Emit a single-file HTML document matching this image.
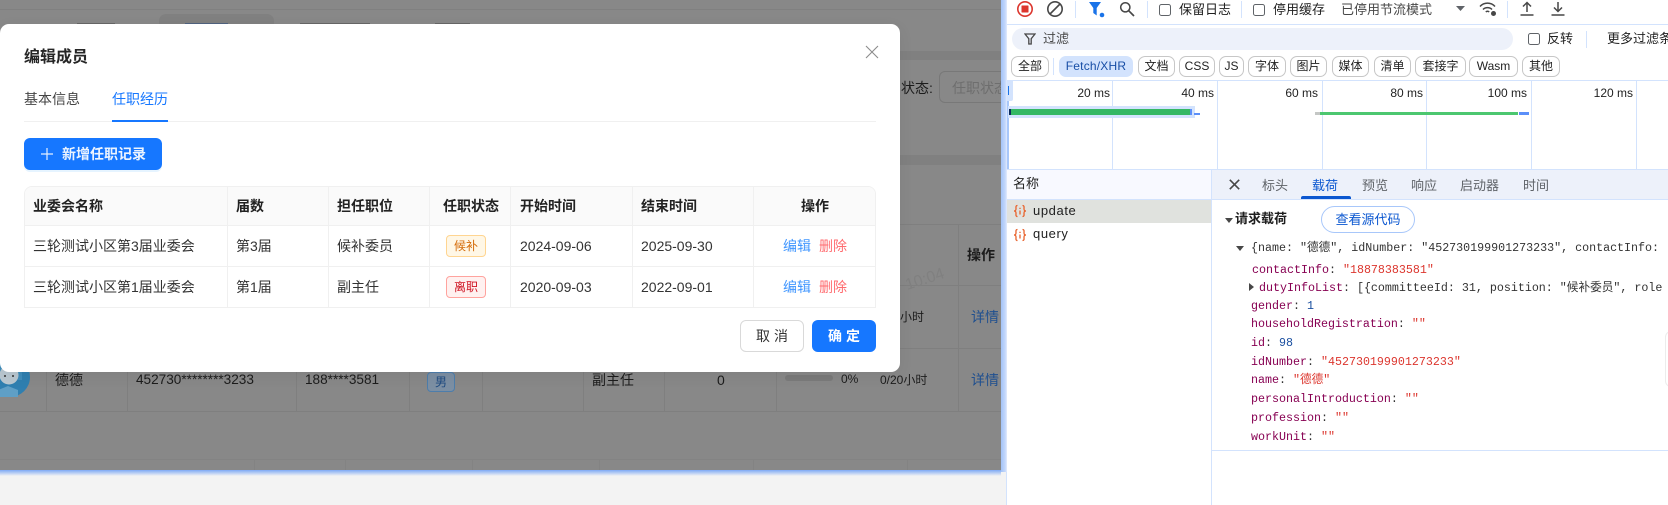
<!DOCTYPE html>
<html lang="zh-CN">
<head>
<meta charset="utf-8">
<title>编辑成员</title>
<style>
html,body{margin:0;padding:0;width:1668px;height:505px;overflow:hidden;background:#f3f3f3}
body{position:relative;font-family:"Liberation Sans","Noto Sans CJK SC",sans-serif;font-size:14px;color:#333}
div,span,svg{position:absolute;box-sizing:border-box}
.t{white-space:nowrap;height:20px;line-height:20px}
.b{font-weight:700;color:#222}
#page{left:0;top:0;width:1001px;height:470px;background:#888;overflow:hidden}
#page .t{color:#1c1c1c}
#modal{left:0;top:24px;width:900px;height:348px;background:#fff;border-radius:9px;box-shadow:0 4px 16px rgba(0,0,0,.06);z-index:5}
.in{left:0;top:0;width:100%;height:100%}
.th{background:#fafafa}
.line{background:#f0f0f0}
.tag{height:22px;width:40px;left:446px;border-radius:4px;font-size:12px;line-height:20px;text-align:center;border:1px solid}
.o{background:#fff7e6;border-color:#ffd591;color:#d46b08}
.d{background:#fff1f0;border-color:#ffa39e;color:#cf1322}
.lk{color:#4096ff}.dl{color:#ff6b6f}
#dt{left:1007px;top:0;width:661px;height:505px;background:#fff;overflow:hidden;font-size:13px;color:#1f1f1f}
.dl2{background:#d3e3fd}
.cb{width:12px;height:12px;border:1.5px solid #5f6368;border-radius:2.5px;background:#fff}
.chip{top:56px;height:21px;border:1px solid #c7c7c7;border-radius:7px;font-size:12px;line-height:19px;text-align:center;color:#1f1f1f;white-space:nowrap;background:#fff}
.ms{top:83px;font-size:12px;height:20px;line-height:20px;text-align:right;width:60px;color:#1f1f1f}
.gl{top:81px;width:1px;height:88px;background:#d3e3fd}
.m{font-family:"Liberation Mono","Noto Sans CJK SC",monospace;font-size:11.67px;white-space:nowrap;height:18px;line-height:18px;color:#333}
.m i{font-style:normal;color:#870052}.m u{text-decoration:none;color:#dc362e}.m b{font-weight:400;color:#1a4fa0}
.tab{top:176px;height:20px;line-height:20px;font-size:13px;color:#5f6368;white-space:nowrap}
</style>
</head>
<body>
<div id="page">
  <div style="left:0;top:9px;width:1001px;height:1px;background:#808080"></div>
  <div style="left:159px;top:14px;width:115px;height:14px;background:#808080;border-radius:7px 7px 0 0"></div>
  <div style="left:77px;top:23px;width:38px;height:1px;background:#666"></div>
  <div style="left:185px;top:23px;width:43px;height:1px;background:#50627f"></div>
  <div style="left:300px;top:23px;width:70px;height:1px;background:#666"></div>
  <div style="left:435px;top:23px;width:35px;height:1px;background:#666"></div>
  <div style="left:900px;top:51px;width:101px;height:9px;background:#808080"></div>
  <div class="t" style="left:901px;top:78px;width:34px">状态:</div>
  <div style="left:939px;top:71px;width:90px;height:32px;border:1px solid #787878;border-radius:6px"></div>
  <div class="t" style="left:952px;top:78px"><span style="position:static;color:#6e6e6e">任职状态</span></div>
  <div style="left:900px;top:155px;width:101px;height:10px;background:#808080"></div>
  <div style="left:900px;top:224px;width:101px;height:1px;background:#7f7f7f"></div>
  <div style="left:900px;top:285px;width:101px;height:1px;background:#7f7f7f"></div>
  <div style="left:0;top:348px;width:1001px;height:1px;background:#7f7f7f"></div>
  <div style="left:0;top:411px;width:1001px;height:1px;background:#7f7f7f"></div>
  <div style="left:0;top:459px;width:1001px;height:1px;background:#838383"></div>
  <div style="left:958px;top:224px;width:1px;height:187px;background:#7f7f7f"></div>
  <div class="t b" style="left:967px;top:245px;font-weight:700">操作</div>
  <div class="t" style="left:905px;top:270px;font-size:16px;transform:rotate(-18deg)"><span style="position:static;color:#808080">10:04</span></div>
  <div class="t" style="left:900px;top:307px;font-size:12px">小时</div>
  <div class="t" style="left:971px;top:307px"><span style="position:static;color:#1f4f8f">详情</span></div>
  <div style="left:46px;top:349px;width:1px;height:62px;background:#7f7f7f"></div>
  <div style="left:127px;top:349px;width:1px;height:62px;background:#7f7f7f"></div>
  <div style="left:296px;top:349px;width:1px;height:62px;background:#7f7f7f"></div>
  <div style="left:409px;top:349px;width:1px;height:62px;background:#7f7f7f"></div>
  <div style="left:482px;top:349px;width:1px;height:62px;background:#7f7f7f"></div>
  <div style="left:583px;top:349px;width:1px;height:62px;background:#7f7f7f"></div>
  <div style="left:664px;top:349px;width:1px;height:62px;background:#7f7f7f"></div>
  <div style="left:776px;top:349px;width:1px;height:62px;background:#7f7f7f"></div>
  <div style="left:254px;top:460px;width:1px;height:10px;background:#838383"></div>
  <div style="left:345px;top:460px;width:1px;height:10px;background:#838383"></div>
  <div style="left:472px;top:460px;width:1px;height:10px;background:#838383"></div>
  <div style="left:599px;top:460px;width:1px;height:10px;background:#838383"></div>
  <div style="left:753px;top:460px;width:1px;height:10px;background:#838383"></div>
  <div style="left:907px;top:460px;width:1px;height:10px;background:#838383"></div>
  <svg style="left:-10px;top:357px" width="40" height="40" viewBox="0 0 40 40"><circle cx="20" cy="20" r="20" fill="#2f7fb0"/><path d="M19 5a12 12 0 0 1 13 12v6H7v-6A12 12 0 0 1 19 5z" fill="#3f8dbb"/><circle cx="19" cy="18" r="9.500" fill="#b9c7d0"/><circle cx="15" cy="19" r="1" fill="#333"/><circle cx="23" cy="19" r="1" fill="#333"/><path d="M8 33l10-4 10 4v7H8z" fill="#5f9fc6"/></svg>
  <div class="t" style="left:55px;top:370px">德德</div>
  <div class="t" style="left:136px;top:370px;font-size:13.6px">452730********3233</div>
  <div class="t" style="left:305px;top:370px;font-size:13.6px">188****3581</div>
  <div style="left:427px;top:372px;width:28px;height:20px;border:1px solid #4d7dab;border-radius:4px;background:#7c8fa3;font-size:12px;line-height:18px;text-align:center;color:#1e4a80">男</div>
  <div class="t" style="left:592px;top:370px">副主任</div>
  <div class="t" style="left:717px;top:370px">0</div>
  <div style="left:785px;top:375px;width:48px;height:6px;border-radius:3px;background:#7a7a7a"></div>
  <div class="t" style="left:841px;top:369px;font-size:12px">0%</div>
  <div class="t" style="left:880px;top:370px;font-size:12px">0/20小时</div>
  <div class="t" style="left:971px;top:370px"><span style="position:static;color:#1f4f8f">详情</span></div>
</div>

<div style="left:0;top:470px;width:1001px;height:6px;background:linear-gradient(#7ea9f5,#f3f3f3)"></div>
<div style="left:1001px;top:0;width:6px;height:472px;background:linear-gradient(90deg,#a3c3f8,#c4d8fb 70%,#e2ecfe)"></div>
<div style="left:1006px;top:472px;width:1px;height:33px;background:#d3e3fd"></div>

<div id="modal">
  <div class="in" style="top:-24px">
    <div class="t" style="left:24px;top:48px;font-size:16px;font-weight:700;color:#262626">编辑成员</div>
    <svg style="left:865px;top:45px" width="14" height="14" viewBox="0 0 14 14"><path d="M1 1l12 12M13 1L1 13" stroke="#8c8c8c" stroke-width="1.1" fill="none"/></svg>
    <div class="t" style="left:24px;top:89px;color:#444">基本信息</div>
    <div class="t" style="left:112px;top:89px;color:#1677ff">任职经历</div>
    <div class="line" style="left:24px;top:121px;width:852px;height:1px"></div>
    <div style="left:112px;top:120px;width:56px;height:2px;background:#1677ff"></div>

    <div style="left:24px;top:138px;width:138px;height:32px;border-radius:6px;background:#1677ff;box-shadow:0 2px 0 rgba(5,145,255,.1)"></div>
    <svg style="left:41px;top:148px" width="12" height="12" viewBox="0 0 12 12"><path d="M6 0v12M0 6h12" stroke="#e4efff" stroke-width="1.2"/></svg>
    <div class="t" style="left:62px;top:144px;color:#fff;font-weight:700;opacity:.92">新增任职记录</div>

    <div style="left:24px;top:186px;width:852px;height:122px;border:1px solid #f0f0f0;border-radius:8px 8px 0 0;overflow:hidden;background:#fff">
      <div class="th" style="left:0;top:0;width:852px;height:38px"></div>
    </div>
    <div class="line" style="left:24px;top:225px;width:852px;height:1px"></div>
    <div class="line" style="left:24px;top:266px;width:852px;height:1px"></div>
    <div class="line" style="left:227px;top:187px;width:1px;height:121px"></div>
    <div class="line" style="left:328px;top:187px;width:1px;height:121px"></div>
    <div class="line" style="left:429px;top:187px;width:1px;height:121px"></div>
    <div class="line" style="left:510px;top:187px;width:1px;height:121px"></div>
    <div class="line" style="left:632px;top:187px;width:1px;height:121px"></div>
    <div class="line" style="left:753px;top:187px;width:1px;height:121px"></div>

    <div class="t b" style="left:33px;top:196px">业委会名称</div>
    <div class="t b" style="left:236px;top:196px">届数</div>
    <div class="t b" style="left:337px;top:196px">担任职位</div>
    <div class="t b" style="left:443px;top:196px">任职状态</div>
    <div class="t b" style="left:520px;top:196px">开始时间</div>
    <div class="t b" style="left:641px;top:196px">结束时间</div>
    <div class="t b" style="left:801px;top:196px">操作</div>

    <div class="t" style="left:33px;top:236px">三轮测试小区第3届业委会</div>
    <div class="t" style="left:236px;top:236px">第3届</div>
    <div class="t" style="left:337px;top:236px">候补委员</div>
    <div class="tag o" style="top:235px">候补</div>
    <div class="t" style="left:520px;top:236px">2024-09-06</div>
    <div class="t" style="left:641px;top:236px">2025-09-30</div>
    <div class="t lk" style="left:783px;top:236px">编辑</div>
    <div class="t dl" style="left:819px;top:236px">删除</div>

    <div class="t" style="left:33px;top:277px">三轮测试小区第1届业委会</div>
    <div class="t" style="left:236px;top:277px">第1届</div>
    <div class="t" style="left:337px;top:277px">副主任</div>
    <div class="tag d" style="top:276px">离职</div>
    <div class="t" style="left:520px;top:277px">2020-09-03</div>
    <div class="t" style="left:641px;top:277px">2022-09-01</div>
    <div class="t lk" style="left:783px;top:277px">编辑</div>
    <div class="t dl" style="left:819px;top:277px">删除</div>

    <div style="left:740px;top:320px;width:64px;height:32px;border:1px solid #d9d9d9;border-radius:6px;background:#fff;text-align:center;line-height:30px;color:#333;letter-spacing:4px;text-indent:4px">取消</div>
    <div style="left:812px;top:320px;width:64px;height:32px;border-radius:6px;background:#1677ff;text-align:center;line-height:32px;color:#fff;font-weight:700;letter-spacing:4px;text-indent:4px">确定</div>
  </div>
</div>

<div id="dt">
  <div class="in" style="left:-1007px;width:1668px">
    <!-- toolbar -->
    <svg style="left:1016px;top:0" width="18" height="18" viewBox="0 0 18 18"><circle cx="9" cy="9" r="7.2" fill="none" stroke="#dc362e" stroke-width="1.6"/><rect x="5.500" y="5.500" width="7" height="7" rx=".5" fill="#dc362e"/></svg>
    <svg style="left:1046px;top:0" width="18" height="18" viewBox="0 0 18 18"><circle cx="9" cy="9" r="7.2" fill="none" stroke="#474747" stroke-width="1.6"/><path d="M4 14L14 4" stroke="#474747" stroke-width="1.6"/></svg>
    <div class="dl2" style="left:1075px;top:1px;width:1px;height:17px"></div>
    <svg style="left:1089px;top:2px" width="16" height="16" viewBox="0 0 16 16"><path d="M0 0h12L7.700 6v7.500L4.300 11V6z" fill="#1a73e8"/><circle cx="13" cy="13" r="2.300" fill="#1a73e8"/></svg>
    <svg style="left:1119px;top:1px" width="16" height="16" viewBox="0 0 16 16"><circle cx="6.300" cy="6.300" r="4.600" fill="none" stroke="#474747" stroke-width="1.500"/><path d="M9.800 9.800L15 15" stroke="#474747" stroke-width="1.700"/></svg>
    <div class="dl2" style="left:1147px;top:1px;width:1px;height:17px"></div>
    <div class="cb" style="left:1159px;top:4px"></div>
    <div class="t" style="left:1179px;top:0">保留日志</div>
    <div class="dl2" style="left:1241px;top:1px;width:1px;height:17px"></div>
    <div class="cb" style="left:1253px;top:4px"></div>
    <div class="t" style="left:1273px;top:0">停用缓存</div>
    <div class="t" style="left:1341px;top:0;color:#474747">已停用节流模式</div>
    <svg style="left:1456px;top:6px" width="9" height="5" viewBox="0 0 9 5"><path d="M0 0h9L4.500 5z" fill="#5f6368"/></svg>
    <svg style="left:1479px;top:1px" width="18" height="16" viewBox="0 0 18 16"><path d="M1 5.500C5 1 12 1 16 5.500M4 8.500C6.500 6 10.500 6 13 8.500M6.800 11C7.800 10 9.200 10 10.200 11" fill="none" stroke="#474747" stroke-width="1.500"/><circle cx="14.500" cy="12.500" r="2.500" fill="#474747"/></svg>
    <div class="dl2" style="left:1507px;top:1px;width:1px;height:17px"></div>
    <svg style="left:1520px;top:1px" width="14" height="15" viewBox="0 0 14 15"><path d="M7 11V1.500M3 5.500l4-4 4 4M.5 14h13" fill="none" stroke="#474747" stroke-width="1.500"/></svg>
    <svg style="left:1551px;top:1px" width="14" height="15" viewBox="0 0 14 15"><path d="M7 1v9.500M3 6.500l4 4 4-4M.5 14h13" fill="none" stroke="#474747" stroke-width="1.500"/></svg>
    <div class="dl2" style="left:1007px;top:24px;width:661px;height:1px"></div>

    <!-- filter row -->
    <div style="left:1012px;top:28px;width:501px;height:22px;background:#edf1fa;border-radius:11px"></div>
    <svg style="left:1024px;top:33px" width="12" height="12" viewBox="0 0 12 12"><path d="M1 1h10L7.200 5.700V11H4.800V5.700z" fill="none" stroke="#474747" stroke-width="1.300"/></svg>
    <div class="t" style="left:1043px;top:29px;color:#474747">过滤</div>
    <div class="cb" style="left:1528px;top:33px"></div>
    <div class="t" style="left:1547px;top:29px">反转</div>
    <div class="dl2" style="left:1586px;top:31px;width:1px;height:17px"></div>
    <div class="t" style="left:1607px;top:29px">更多过滤条件</div>

    <!-- chips -->
    <div class="chip" style="left:1011px;width:38px">全部</div>
    <div class="dl2" style="left:1053px;top:58px;width:1px;height:17px"></div>
    <div class="chip" style="left:1059px;width:74px;background:#d3e3fd;border-color:#d3e3fd;color:#174ea6;letter-spacing:.2px">Fetch/XHR</div>
    <div class="chip" style="left:1138px;width:37px">文档</div>
    <div class="chip" style="left:1179px;width:36px">CSS</div>
    <div class="chip" style="left:1219px;width:25px">JS</div>
    <div class="chip" style="left:1248px;width:38px">字体</div>
    <div class="chip" style="left:1290px;width:37px">图片</div>
    <div class="chip" style="left:1332px;width:37px">媒体</div>
    <div class="chip" style="left:1374px;width:37px">清单</div>
    <div class="chip" style="left:1415px;width:51px">套接字</div>
    <div class="chip" style="left:1469px;width:49px">Wasm</div>
    <div class="chip" style="left:1522px;width:38px">其他</div>
    <div class="dl2" style="left:1007px;top:80px;width:661px;height:1px"></div>

    <!-- overview -->
    <div class="gl" style="left:1112px"></div>
    <div class="gl" style="left:1217px"></div>
    <div class="gl" style="left:1322px"></div>
    <div class="gl" style="left:1426px"></div>
    <div class="gl" style="left:1531px"></div>
    <div class="gl" style="left:1636px"></div>
    <div class="ms" style="left:1050px">20 ms</div>
    <div class="ms" style="left:1154px">40 ms</div>
    <div class="ms" style="left:1258px">60 ms</div>
    <div class="ms" style="left:1363px">80 ms</div>
    <div class="ms" style="left:1467px">100 ms</div>
    <div class="ms" style="left:1573px">120 ms</div>
    <div style="left:1007px;top:81px;width:2px;height:88px;background:#a8c7fa"></div>
    <div style="left:1007px;top:81px;width:6px;height:20px;background:#d3e3fd;border-radius:0 0 2px 0"></div>
    <div style="left:1008px;top:86px;width:1px;height:9px;background:#1a73e8"></div>
    <div style="left:1008px;top:106px;width:187px;height:12px;background:#d3e3fd"></div>
    <div style="left:1009px;top:109px;width:2px;height:6px;background:#0d2a5c"></div>
    <div style="left:1011px;top:109px;width:179px;height:6px;background:#34b864"></div>
    <div style="left:1190px;top:109px;width:2px;height:6px;background:#5b8ff9"></div>
    <div style="left:1194px;top:113px;width:6px;height:1.500px;background:#5b8ff9"></div>
    <div style="left:1315px;top:112px;width:5px;height:3px;background:#c4c7c5"></div>
    <div style="left:1320px;top:112px;width:198px;height:3px;background:#4cc770"></div>
    <div style="left:1519px;top:112px;width:10px;height:3px;background:#5b8ff9"></div>
    <div class="dl2" style="left:1007px;top:169px;width:661px;height:1px"></div>

    <!-- name column -->
    <div style="left:1007px;top:170px;width:204px;height:29px;background:#f8f9ff"></div>
    <div class="t" style="left:1013px;top:174px">名称</div>
    <div class="dl2" style="left:1007px;top:199px;width:204px;height:1px"></div>
    <div style="left:1007px;top:200px;width:204px;height:23px;background:#e0e2de"></div>
    <svg style="left:1013px;top:204px" width="14" height="14" viewBox="0 0 14 14"><path d="M4.500 1.500C2.500 1.500 3 3 3 5S1 7 1 7s2 0 2 2-.5 3.500 1.500 3.500M9.500 1.500C11.500 1.500 11 3 11 5s2 2 2 2-2 0-2 2 .5 3.500-1.500 3.500" fill="none" stroke="#e8622c" stroke-width="1.300"/><path d="M7 3.800v1.200M7 6.500v4" stroke="#e8622c" stroke-width="1.300"/></svg>
    <div class="t" style="left:1033px;top:201px;letter-spacing:.6px;font-size:13px">update</div>
    <svg style="left:1013px;top:228px" width="14" height="14" viewBox="0 0 14 14"><path d="M4.500 1.500C2.500 1.500 3 3 3 5S1 7 1 7s2 0 2 2-.5 3.500 1.500 3.500M9.500 1.500C11.500 1.500 11 3 11 5s2 2 2 2-2 0-2 2 .5 3.500-1.500 3.500" fill="none" stroke="#e8622c" stroke-width="1.300"/><path d="M7 3.800v1.200M7 6.500v4" stroke="#e8622c" stroke-width="1.300"/></svg>
    <div class="t" style="left:1033px;top:224px;letter-spacing:.6px;font-size:13px">query</div>
    <div class="dl2" style="left:1211px;top:170px;width:1px;height:335px"></div>

    <!-- detail tabs -->
    <div style="left:1212px;top:170px;width:456px;height:29px;background:#edf1fa"></div>
    <div class="dl2" style="left:1212px;top:199px;width:456px;height:1px"></div>
    <svg style="left:1229px;top:179px" width="11" height="11" viewBox="0 0 11 11"><path d="M.8.8l9.400 9.400M10.200.8L.8 10.200" stroke="#474747" stroke-width="1.600"/></svg>
    <div class="tab" style="left:1262px">标头</div>
    <div class="tab" style="left:1312px;color:#0b57d0">载荷</div>
    <div style="left:1301px;top:196px;width:50px;height:3px;background:#0b57d0;border-radius:2px 2px 0 0"></div>
    <div class="tab" style="left:1362px">预览</div>
    <div class="tab" style="left:1411px">响应</div>
    <div class="tab" style="left:1460px">启动器</div>
    <div class="tab" style="left:1523px">时间</div>

    <!-- payload -->
    <svg style="left:1225px;top:218px" width="8" height="5" viewBox="0 0 8 5"><path d="M0 0h8L4 5z" fill="#474747"/></svg>
    <div class="t" style="left:1235px;top:209px;font-weight:700;color:#1f1f1f">请求载荷</div>
    <div style="left:1321px;top:206px;width:94px;height:27px;border:1px solid #a8c7fa;border-radius:14px;text-align:center;line-height:25px;color:#0b57d0">查看源代码</div>
    <svg style="left:1236px;top:246px" width="8" height="5" viewBox="0 0 8 5"><path d="M0 0h8L4 5z" fill="#474747"/></svg>
    <div class="m" style="left:1251px;top:239px">{name: "德德", idNumber: "452730199901273233", contactInfo:</div>
    <div class="m" style="left:1252px;top:261px"><i>contactInfo</i>: <u>"18878383581"</u></div>
    <svg style="left:1249px;top:283px" width="5" height="8" viewBox="0 0 5 8"><path d="M0 0v8l5-4z" fill="#474747"/></svg>
    <div class="m" style="left:1259px;top:279px"><i>dutyInfoList</i>: [{committeeId: 31, position: "候补委员", role</div>
    <div class="m" style="left:1251px;top:297px"><i>gender</i>: <b>1</b></div>
    <div class="m" style="left:1251px;top:315px"><i>householdRegistration</i>: <u>""</u></div>
    <div class="m" style="left:1251px;top:334px"><i>id</i>: <b>98</b></div>
    <div class="m" style="left:1251px;top:353px"><i>idNumber</i>: <u>"452730199901273233"</u></div>
    <div class="m" style="left:1251px;top:371px"><i>name</i>: <u>"德德"</u></div>
    <div class="m" style="left:1251px;top:390px"><i>personalIntroduction</i>: <u>""</u></div>
    <div class="m" style="left:1251px;top:409px"><i>profession</i>: <u>""</u></div>
    <div class="m" style="left:1251px;top:428px"><i>workUnit</i>: <u>""</u></div>
    <div class="dl2" style="left:1212px;top:450px;width:456px;height:1px"></div>
    <div style="left:1665px;top:331px;width:20px;height:56px;border:1px solid #ececec;border-radius:6px;background:#fff"></div>
  </div>
</div>
</body>
</html>
